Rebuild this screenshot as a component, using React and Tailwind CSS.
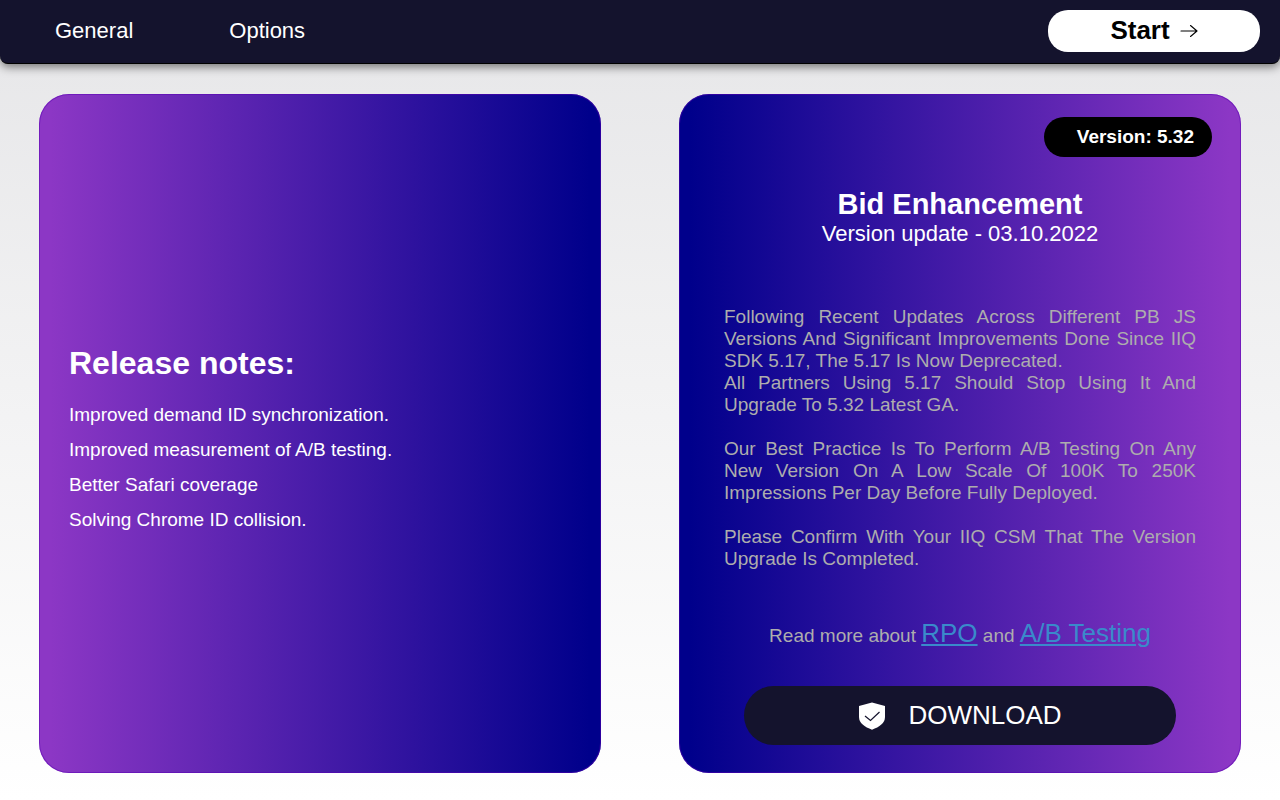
import React from "react";

const NOTES = [
  "Improved demand ID synchronization.",
  "Improved measurement of A/B testing.",
  "Better Safari coverage",
  "Solving Chrome ID collision.",
];

// ─── Icons ────────────────────────────────────────────────────────────────────
function ArrowIcon() {
  return (
    <svg width="18" height="14" viewBox="0 0 18 14" fill="none" stroke="black" strokeWidth="1.1" strokeLinecap="round" strokeLinejoin="round" aria-hidden="true">
      <path d="M1 7h16M10.5 1.5 17 7l-6.500 5.500" />
    </svg>
  );
}

function ShieldIcon() {
  return (
    <svg width="28" height="28" viewBox="0 0 28 28" fill="none" aria-hidden="true">
      <path d="M14 .5 27 4V15C27 21 21.500 25 14 27.700 6.500 25 1 21 1 15V4Z" fill="white" />
      <path d="m7 14 5.500 4.500L21.500 10" stroke="#14132d" strokeWidth="1.200" />
    </svg>
  );
}

// ─── Header ───────────────────────────────────────────────────────────────────
function Header() {
  return (
    <header className="flex h-16 items-center justify-between rounded-b-lg border-b border-black bg-[#14132d] pr-5 pb-0.5 pl-[55px] shadow-[0_3px_10px_rgba(0,0,0,0.5)]">
      <nav className="flex gap-24 text-[22px] text-white">
        <a href="#general">General</a>
        <a href="#options">Options</a>
      </nav>
      <button className="flex h-[42px] w-[212px] items-center justify-center gap-2.5 rounded-[20px] bg-white text-[26px] font-bold text-black">
        Start
        <ArrowIcon />
      </button>
    </header>
  );
}

// ─── Cards ────────────────────────────────────────────────────────────────────
function ReleaseNotes() {
  return (
    <section className="flex flex-col justify-center rounded-[30px] bg-linear-to-l/srgb from-[#00008b] from-2% to-[#8c37c5] to-98% px-[30px] pt-3.5 text-white shadow-[inset_0_0_0_1px_rgba(90,0,180,0.5)]">
      <h2 className="text-[32px] leading-9 font-bold">Release notes:</h2>
      <ul className="mt-4 text-[19px] leading-[35px]">
        {NOTES.map((note) => (
          <li key={note}>{note}</li>
        ))}
      </ul>
    </section>
  );
}

function BidEnhancement() {
  return (
    <section className="flex flex-col rounded-[30px] bg-linear-to-r/srgb from-[#00008b] from-2% to-[#8c37c5] to-98% px-[45px] pt-[23px] pb-7 shadow-[inset_0_0_0_1px_rgba(90,0,180,0.5)]">
      <span className="-mr-4 flex h-10 w-[168px] items-center justify-end self-end rounded-[20px] bg-black pr-[18px] text-[19px] font-bold text-white">
        Version: 5.32
      </span>

      <div className="mt-8 text-center text-white">
        <h2 className="text-[29px] leading-[30px] font-bold">Bid Enhancement</h2>
        <p className="text-[22px] leading-[30px]">Version update - 03.10.2022</p>
      </div>

      <div className="mt-[57px] space-y-[22px] text-justify text-[19px] leading-[22px] text-[#adadad]">
        <p>
          Following Recent Updates Across Different PB JS Versions And Significant Improvements Done Since IIQ SDK 5.17, The 5.17 Is Now Deprecated.
          <br />
          All Partners Using 5.17 Should Stop Using It And Upgrade To 5.32 Latest GA.
        </p>
        <p>
          Our Best Practice Is To Perform A/B Testing On Any New Version On A Low Scale Of 100K To 250K Impressions Per Day Before Fully Deployed.
        </p>
        <p>Please Confirm With Your IIQ CSM That The Version Upgrade Is Completed.</p>
      </div>

      <p className="mt-auto text-center text-[19px] leading-8 text-[#adadad]">
        Read more about{" "}
        <a href="#rpo" className="text-[26px] text-[#3a8acb] underline">RPO</a> and{" "}
        <a href="#ab-testing" className="text-[26px] text-[#3a8acb] underline">A/B Testing</a>
      </p>

      <button className="mx-5 mt-[34px] flex h-[59px] items-center justify-center gap-[22px] rounded-full bg-[#14132d] text-[26px] text-white">
        <ShieldIcon />
        DOWNLOAD
      </button>
    </section>
  );
}

export default function App() {
  return (
    <div className="flex min-h-screen flex-col bg-linear-to-b/srgb from-[#e6e6e8] to-white font-['Liberation_Sans',Arial,sans-serif]">
      <Header />
      <main className="grid flex-1 grid-cols-2 gap-[78px] px-[39px] pt-[30px] pb-[27px]">
        <ReleaseNotes />
        <BidEnhancement />
      </main>
    </div>
  );
}
